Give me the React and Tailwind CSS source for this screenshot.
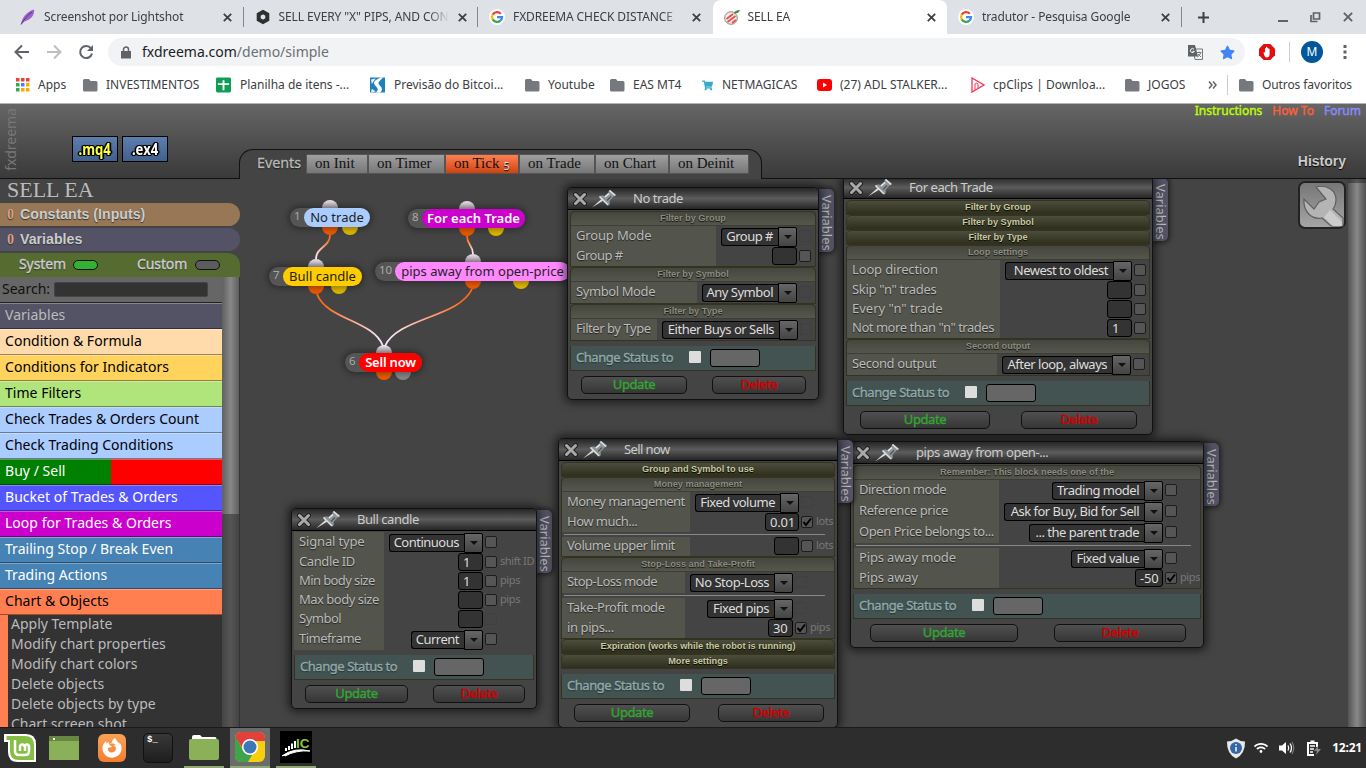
import React from 'react';
import { FaFirefoxBrowser, FaShoppingCart, FaStar, FaWifi } from 'react-icons/fa';

const Folder = () => (
  <svg width="15" height="14" viewBox="0 0 15 14">
    <path d="M0 2.5Q0 1 1.5 1H6l1.5 2H13q1.5 0 1.5 1.5V12q0 1.500-1.500 1.500h-11.500Q0 13.500 0 12z" fill="#75797d" />
  </svg>
);

const GoogleIcon = () => (
  <svg width="16" height="16" viewBox="0 0 16 16">
    <circle cx="8" cy="8" r="8" fill="#fff" />
    <g fill="none" strokeWidth="2.300">
      <path d="M11.800 4.800A5 5 0 0 0 3.700 5.600" stroke="#ea4335" />
      <path d="M3.700 5.600A5 5 0 0 0 3.700 10.400" stroke="#fbbc05" />
      <path d="M3.700 10.400A5 5 0 0 0 11.400 11.600" stroke="#34a853" />
      <path d="M11.400 11.600A5 5 0 0 0 13 8.200H8" stroke="#4285f4" />
    </g>
  </svg>
);

const FeatherIcon = () => (
  <svg width="16" height="16" viewBox="0 0 16 16">
    <path d="M1 15.500C2 9 6 3 14 .5c1 5-3 10-9.500 12z" fill="#9a62c4" />
    <path d="M1 15.500C4 10 8 6 12 3" stroke="#5f2f91" fill="none" />
  </svg>
);

const HexIcon = () => (
  <svg width="16" height="16" viewBox="0 0 16 16">
    <path d="M8 3l4.300 2.500v5L8 13l-4.300-2.500v-5z" fill="none" stroke="#2f2f2f" strokeWidth="4" />
  </svg>
);

const EaIcon = () => (
  <svg width="16" height="16" viewBox="0 0 16 16">
    <circle cx="7" cy="9" r="6.300" fill="#f1ecea" stroke="#8d8583" strokeWidth="1" />
    <path d="M2.500 10l6.500-5M3.500 13l8-6M8 14l4-3" stroke="#ea5045" strokeWidth="1.700" />
    <path d="M9.500 4.500q1.500-3.500 6.500-3.500Q14.500 5 9.500 4.500z" fill="#3a8b32" />
  </svg>
);

const Cross = ({ size = 9, color = '#3c4043', w = 1.800 }) => (
  <svg width={size} height={size} viewBox="0 0 9 9">
    <path d="M.8.8l7.400 7.400M8.200.8L.8 8.200" stroke={color} strokeWidth={w} />
  </svg>
);

const browserTabs = [
  { title: 'Screenshot por Lightshot', icon: <FeatherIcon />, divider: true },
  { title: 'SELL EVERY "X" PIPS, AND CONT', icon: <HexIcon />, divider: true },
  { title: 'FXDREEMA CHECK DISTANCE', icon: <GoogleIcon /> },
  { title: 'SELL EA', icon: <EaIcon />, active: true },
  { title: 'tradutor - Pesquisa Google', icon: <GoogleIcon />, divider: true },
];

const TabStrip = () => (
  <div className="flex h-[34px] bg-[#dee1e6] pl-[9px] text-[12px] text-[#3c4043]">
    {browserTabs.map((tab) => (
      <div
        key={tab.title}
        className={`relative flex w-[234.500px] shrink-0 items-center pl-[11px] ${tab.active ? 'rounded-t-[8px] bg-white' : ''}`}
      >
        {tab.icon}
        <div className="ml-[8px] w-[173px] overflow-hidden whitespace-nowrap tracking-[-0.1px] [mask-image:linear-gradient(to_right,black_150px,transparent_170px)]">
          {tab.title}
        </div>
        <div className="ml-[6px] flex"><Cross /></div>
        {tab.divider && <div className="absolute right-0 top-[7px] h-[20px] w-px bg-[#80868b]" />}
      </div>
    ))}
    <div className="flex flex-1 items-center">
      <svg className="ml-[15px]" width="13" height="13" viewBox="0 0 13 13"><path d="M6.500 1v11M1 6.500h11" stroke="#3c4043" strokeWidth="2" /></svg>
      <svg className="ml-[68px]" width="10" height="12" viewBox="0 0 10 12"><path d="M0 10h10" stroke="#5f6368" strokeWidth="2" /></svg>
      <svg className="ml-[22px]" width="11" height="11" viewBox="0 0 11 11"><path d="M3.500 1h6v6h-6zM1 3v6.500h6.500" fill="none" stroke="#5f6368" strokeWidth="1.700" /></svg>
      <div className="ml-[22px]"><Cross size={10} color="#5f6368" w={1.700} /></div>
    </div>
  </div>
);

const Toolbar = () => (
  <div className="flex h-[36px] items-center bg-white pl-[14px]">
    <svg width="16" height="16" viewBox="0 0 16 16"><path d="M15 8H2M8 1.500L1.500 8 8 14.500" fill="none" stroke="#5f6368" strokeWidth="2" /></svg>
    <svg className="ml-[16px]" width="16" height="16" viewBox="0 0 16 16"><path d="M1 8h13M8 1.500L14.500 8 8 14.500" fill="none" stroke="#bcbfc2" strokeWidth="2" /></svg>
    <svg className="ml-[16px]" width="16" height="16" viewBox="0 0 16 16">
      <path d="M13 4.500A6 6 0 1 0 14 9.500" fill="none" stroke="#5f6368" strokeWidth="2" />
      <path d="M15 1v6H9z" fill="#5f6368" />
    </svg>
    <div className="ml-[14px] flex h-[28px] w-[1137px] items-center rounded-full bg-[#f1f3f4] pl-[13px]">
      <svg width="10" height="13" viewBox="0 0 10 13">
        <path d="M0 5h10v7.500H0z" fill="#5f6368" />
        <path d="M2.500 5V3.500a2.500 2.500 0 0 1 5 0V5" fill="none" stroke="#5f6368" strokeWidth="1.500" />
      </svg>
      <div className="ml-[11px] flex-1 pb-px text-[14px] text-[#6b7075]">
        <span className="text-[#202124]">fxdreema.com</span>/demo/simple
      </div>
      <svg className="mr-[17px]" width="15" height="15" viewBox="0 0 15 15">
        <path d="M5 4h9.500v10.500H7z" fill="#f1f3f4" stroke="#75797d" />
        <path d="M0 0h7l3 11.500H0z" fill="#5f6368" />
        <path d="M6 4.300a2 2 0 1 0 .3 2H4.500" fill="none" stroke="#fff" />
        <path d="M9 7.500h4.500M11 6.500v1M12.500 8q-.5 2.500-3 4M10 9l3 3" fill="none" stroke="#75797d" />
      </svg>
      <FaStar className="mr-[10px] text-[#4285f4]" size={15} />
    </div>
    <svg className="ml-[14px]" width="16" height="16" viewBox="0 0 16 16">
      <path d="M4.700 0h6.600L16 4.700v6.600L11.300 16H4.700L0 11.300V4.700z" fill="#e40d0d" />
      <path d="M4.500 8.500l1-.5.5 1V4.200q.5-.5 1 0V3q.6-.5 1.200 0v1q.6-.5 1.200 0v1q.6-.5 1.200 0V10q0 3.500-3 3.500Q5.500 13.500 4.500 8.500z" fill="#fff" />
    </svg>
    <div className="ml-[14px] h-[20px] w-px bg-[#c9ccd0]" />
    <div className="ml-[11px] flex h-[22px] w-[22px] items-center justify-center rounded-full bg-[#01579b] text-[12px] text-white">M</div>
    <svg className="ml-[20px]" width="4" height="14" viewBox="0 0 4 14">
      <path d="M.5 0h3v3h-3zM.5 5.500h3v3h-3zM.5 11h3v3h-3z" fill="#5f6368" />
    </svg>
  </div>
);

const AppsIcon = () => (
  <svg width="14" height="14" viewBox="0 0 14 14">
    <path d="M0 0h3.500v3.500H0zM5 0h3.500v3.500H5zM10 0h3.500v3.500H10z" fill="#ea4335" />
    <path d="M0 5h3.500v3.500H0zM0 10h3.500v3.500H0z" fill="#34a853" />
    <path d="M5 5h3.500v3.500H5z" fill="#4285f4" />
    <path d="M10 5h3.500v3.500H10zM5 10h3.500v3.500H5zM10 10h3.500v3.500H10z" fill="#f9ab00" />
  </svg>
);

const SheetIcon = () => (
  <svg width="16" height="16" viewBox="0 0 16 16">
    <rect width="16" height="16" rx="1.500" fill="#0f9d58" />
    <path d="M2 7h12M8 3v10.500" stroke="#fff" strokeWidth="2" />
  </svg>
);

const BitcoinIcon = () => (
  <svg width="16" height="16" viewBox="0 0 16 16">
    <path d="M0 0h16v16H0z" fill="#1f80b8" />
    <path d="M11 0h3l-4 4q-2 2 0 4 5 4 1 8H6q4-3 1-6-5-4-1-7z" fill="#fff" />
    <path d="M1 2l5-1-4 6zM2 12l4 3-5 1z" fill="#e5f2f9" />
  </svg>
);

const YoutubeIcon = () => (
  <svg width="15" height="12" viewBox="0 0 15 12">
    <rect width="15" height="12" rx="3" fill="#f00" />
    <path d="M6 3.500v5L10 6z" fill="#fff" />
  </svg>
);

const ClipsIcon = () => (
  <svg width="15" height="16" viewBox="0 0 15 16">
    <path d="M1 1v14l12-7z" fill="none" stroke="#ee3557" strokeWidth="1.300" />
    <path d="M4 13V7q2-2 3 0v4" fill="none" stroke="#ee3557" />
  </svg>
);

const bookmarks = [
  { name: 'Apps', icon: <AppsIcon />, width: 'w-[68px]' },
  { name: 'INVESTIMENTOS', icon: <Folder />, width: 'w-[133px]' },
  { name: 'Planilha de itens -...', icon: <SheetIcon />, width: 'w-[154px]', gap: 'mr-[9px]' },
  { name: 'Previsão do Bitcoi...', icon: <BitcoinIcon />, width: 'w-[155px]', gap: 'mr-[9px]' },
  { name: 'Youtube', icon: <Folder />, width: 'w-[85px]' },
  { name: 'EAS MT4', icon: <Folder />, width: 'w-[90px]' },
  { name: 'NETMAGICAS', icon: <FaShoppingCart className="text-[#35aacb]" size={11} />, width: 'w-[117px]', gap: 'mr-[7px]' },
  { name: '(27) ADL STALKER...', icon: <YoutubeIcon />, width: 'w-[154px]' },
  { name: 'cpClips | Downloa...', icon: <ClipsIcon />, width: 'w-[154px]', gap: 'mr-[7px]' },
  { name: 'JOGOS', icon: <Folder />, width: 'w-[83px]' },
];

const Bookmarks = () => (
  <div className="flex h-[34px] items-center border-b border-[#b5b5b5] bg-white pb-[3px] pl-[15px] text-[12px] text-[#3c4043]">
    {bookmarks.map((b) => (
      <div key={b.name} className={`flex shrink-0 items-center whitespace-nowrap ${b.width}`}>
        <span className={`flex w-[15px] shrink-0 justify-center ${b.gap || 'mr-[8px]'}`}>{b.icon}</span>
        {b.name}
      </div>
    ))}
    <svg width="9" height="8" viewBox="0 0 9 8"><path d="M1 .5L4 4 1 7.500M5 .5L8 4 5 7.500" fill="none" stroke="#5f6368" strokeWidth="1.500" /></svg>
    <div className="ml-[10px] h-[20px] w-px bg-[#c9ccd0]" />
    <div className="ml-[11px] flex items-center gap-[8px] whitespace-nowrap tracking-[-0.1px]"><Folder />Outros favoritos</div>
  </div>
);

const eventTabs = [
  { name: 'on Init', width: 'w-[62px]' },
  { name: 'on Timer', width: 'w-[77px]' },
  { name: 'on Tick', width: 'w-[74px]', count: 5 },
  { name: 'on Trade', width: 'w-[76px]' },
  { name: 'on Chart', width: 'w-[74px]' },
  { name: 'on Deinit', width: 'w-[80px]' },
];

const Header = () => (
  <div className="relative flex h-[75px] shrink-0 border-b border-[#111] bg-linear-to-b from-[#666] to-[#3a3a3a]">
    <div className="flex h-[70px] w-[20px] items-center justify-center text-[14px] text-[#777] [writing-mode:sideways-lr]">fxdreema</div>
    <div className="flex w-[219px] gap-[4px] pl-[52px] pt-[32px] text-[16px] font-bold">
      {['.mq4', '.ex4'].map((ext) => (
        <div key={ext} className="flex h-[26px] w-[46px] items-center justify-center border border-black bg-linear-to-b from-[#5d7fae] to-[#41608c]">
          <span className={`scale-x-[0.82] leading-none [text-shadow:1px_1px_0_#000,-1px_-1px_0_#000,1px_-1px_0_#000,-1px_1px_0_#000,0_0_2px_#000,2px_0_1px_#000,-2px_0_1px_#000] ${ext === '.mq4' ? 'text-[#ff4]' : 'text-white'}`}>{ext}</span>
        </div>
      ))}
    </div>
    <div className="mb-[-1px] mt-[45px] flex w-[523px] rounded-tl-[14px] rounded-tr-[14px] border-x border-t border-[#111] bg-[#444] pl-[17px] pt-[4px]">
      <span className="w-[49px] text-[14.300px] leading-[18px] text-[#bbb] [-webkit-text-stroke:0.3px_currentColor] [text-shadow:0_1px_1px_#000]">Events</span>
      {eventTabs.map((tab) => (
        <div
          key={tab.name}
          className={`flex h-[20px] items-center justify-start whitespace-nowrap border border-[#555] pl-[8px] pb-px font-['Liberation_Serif',serif] text-[15px] text-[#111] ${tab.width} ${tab.count ? 'bg-linear-to-b from-[#ff7f50] to-[#cf420c]' : 'bg-linear-to-b from-[#a0a0a0] to-[#777]'}`}
        >
          {tab.name}
          {tab.count && <sub className="ml-[4px] font-['Noto_Sans',sans-serif] text-[11px] text-[#ddd] [text-shadow:0_1px_1px_#000]">{tab.count}</sub>}
        </div>
      ))}
    </div>
    <div className="flex flex-1 flex-col items-end pr-[5px] text-[12px] leading-[14px]">
      <div className="flex gap-[10px] [-webkit-text-stroke:0.4px_currentColor]">
        <span className="text-[#bf0]">Instructions</span>
        <span className="text-[#ff5e3a]">How To</span>
        <span className="text-[#8a8aff]">Forum</span>
      </div>
      <div className="mr-[15px] mt-[36px] font-['Liberation_Sans',sans-serif] text-[14px] font-bold text-[#ccc] [text-shadow:0_1px_1px_#000]">History</div>
    </div>
  </div>
);

const categories = [
  { name: 'Variables', style: 'bg-[#545366] text-[#bbb]' },
  { name: 'Condition & Formula', style: 'bg-[#ffdaaa] text-black' },
  { name: 'Conditions for Indicators', style: 'bg-[#ffd35c] text-black' },
  { name: 'Time Filters', style: 'bg-[#b0e57c] text-black' },
  { name: 'Check Trades & Orders Count', style: 'bg-[#aaccff] text-black' },
  { name: 'Check Trading Conditions', style: 'bg-[#aaccff] text-black' },
  { name: 'Buy / Sell', style: 'bg-linear-to-r from-[#008000] from-50% to-[#ff0000] to-50% text-white' },
  { name: 'Bucket of Trades & Orders', style: 'bg-[#5555ff] text-white' },
  { name: 'Loop for Trades & Orders', style: 'bg-[#cc00cc] text-white' },
  { name: 'Trailing Stop / Break Even', style: 'bg-[#4682b4] text-white' },
  { name: 'Trading Actions', style: 'bg-[#4682b4] text-white' },
  { name: 'Chart & Objects', style: 'bg-[#ff7f50] text-black' },
];

const chartBlocks = ['Apply Template', 'Modify chart properties', 'Modify chart colors', 'Delete objects', 'Delete objects by type', 'Chart screen shot'];

const Sidebar = () => (
  <div className="flex w-[240px] shrink-0 flex-col overflow-hidden">
    <div className="h-[24px] shrink-0 pl-[7px] font-['Liberation_Serif',serif] text-[22px] leading-[22px] text-[#bbb]">SELL EA</div>
    <div className="mb-[2px] flex h-[23px] w-[240px] shrink-0 items-center gap-[6px] rounded-r-[12px] bg-[#977755] pl-[7px] font-['Liberation_Sans',sans-serif] text-[14.200px] font-bold text-[#ccc] [text-shadow:0_1px_1px_#333]">
      <span className="font-['Liberation_Serif',serif] text-[14px] text-[#d9a080]">0</span>Constants (Inputs)
    </div>
    <div className="mb-[2px] flex h-[23px] w-[240px] shrink-0 items-center gap-[6px] rounded-r-[12px] bg-[#545366] pl-[7px] font-['Liberation_Sans',sans-serif] text-[14.200px] font-bold text-[#ccc] [text-shadow:0_1px_1px_#333]">
      <span className="font-['Liberation_Serif',serif] text-[14px] text-[#d9a080]">0</span>Variables
    </div>
    <div className="flex h-[24px] w-[240px] shrink-0 items-center rounded-tr-[12px] bg-[#556b2f] pb-[3px] pl-[19px] text-[14px] tracking-[-0.1px] text-[#ccc] [-webkit-text-stroke:0.4px_currentColor] [text-shadow:0_1px_1px_#222]">
      <span className="w-[54px]">System</span>
      <span className="mt-[3px] h-[10px] w-[25px] rounded-full border border-[#111] bg-[#32b132]" />
      <span className="ml-[39px] w-[58px]">Custom</span>
      <span className="mt-[3px] h-[10px] w-[25px] rounded-full border border-[#111] bg-[#5c5c5c]" />
    </div>
    <div className="flex min-h-0 flex-1">
      <div className="w-[222px] overflow-hidden bg-[#333] text-[14px]">
        <div className="flex h-[26px] items-center border-b border-[#222] bg-[#666] pl-[2px] text-[#111]">
          <span className="pb-[2px]">Search:</span>
          <div className="ml-[4px] h-[15px] w-[154px] rounded-[2px] border border-[#444] bg-[#333]" />
        </div>
        {categories.map((c) => (
          <div key={c.name} className={`h-[26px] whitespace-nowrap border-b border-black/40 pl-[5px] leading-[24px] tracking-[0.03px] shadow-[inset_0_1px_0_rgba(255,255,255,0.3)] ${c.style}`}>
            {c.name}
          </div>
        ))}
        <div className="border-l-8 border-[#ff7f50] pl-[3px] text-[#bbb]">
          {chartBlocks.map((name) => (
            <div key={name} className="h-[20px] leading-[18px]">{name}</div>
          ))}
        </div>
      </div>
      <div className="w-[18px] border-r border-[#333] bg-linear-to-r from-[#444] via-[#555] to-[#444]">
        <div className="h-[237px] bg-linear-to-r from-[#606060] via-[#888] to-[#606060]" />
      </div>
    </div>
  </div>
);

const nodes = [
  { id: 1, name: 'No trade', pos: 'left-[50px] top-[29px]', num: 'w-[14px]', pill: 'w-[66px] bg-[#aaccff] text-[#222]', dotIn: 'left-[32px]', out: 'left-[32px]', out2: 'left-[52px] bg-[#e0b800]' },
  { id: 8, name: 'For each Trade', pos: 'left-[168px] top-[30px]', num: 'w-[14px]', pill: 'w-[103px] bg-[#cc00cc] text-white font-semibold', dotIn: 'left-[51px]', out: 'left-[51px]', out2: 'left-[80px] bg-[#e0b800]' },
  { id: 7, name: 'Bull candle', pos: 'left-[29px] top-[88px]', num: 'w-[14px]', pill: 'w-[79px] bg-[#ffcc00] text-[#222]', dotIn: 'left-[39px]', out: 'left-[39px]', out2: 'left-[62px] bg-[#e0b800]' },
  { id: 10, name: 'pips away from open-price', pos: 'left-[135px] top-[83px]', num: 'w-[20px]', pill: 'w-[175px] bg-[#ff88ff] text-[#222]', dotIn: 'left-[90px]', out: 'left-[90px]', out2: 'left-[138px] bg-[#e0b800]' },
  { id: 6, name: 'Sell now', pos: 'left-[105px] top-[174px]', num: 'w-[14px]', pill: 'w-[63px] bg-[#ff0000] text-white font-semibold tracking-[-0.2px]', dotIn: 'left-[31px]', out: 'left-[31px]', out2: 'left-[50px] bg-[#888]' },
];

const Node = ({ node }) => (
  <div className={`absolute ${node.pos}`}>
    <div className={`absolute top-[-8px] h-[9px] w-[16px] rounded-t-full bg-linear-to-b from-[#f0e4f0] to-[#a79fa7] ${node.dotIn}`} />
    <div className={`absolute bottom-[-8px] h-[9px] w-[16px] rounded-b-full bg-[#ee5a00] ${node.out}`} />
    <div className={`absolute bottom-[-8px] h-[9px] w-[16px] rounded-b-full ${node.out2}`} />
    <div className="relative flex h-[19px] rounded-full bg-[#555] shadow-[0_0_6px_2px_rgba(0,0,0,0.35)]">
      <span className={`pl-[4px] text-[11.500px] leading-[16px] text-[#aaa] ${node.num}`}>{node.id}</span>
      <span className={`flex h-[19px] items-center justify-center whitespace-nowrap rounded-full text-[13px] ${node.pill}`}>{node.name}</span>
    </div>
  </div>
);

const links = [
  { from: [90, 56], to: [76, 80] },
  { from: [227, 57], to: [233, 75] },
  { from: [77, 115], to: [143, 167] },
  { from: [232, 110], to: [145, 167] },
];

const Links = () => (
  <svg className="absolute left-0 top-0" width="340" height="240">
    {links.map(({ from: [x1, y1], to: [x2, y2] }, i) => {
      const mid = (y1 + y2) / 2;
      const bend = y2 - y1 > 30 ? (x2 - x1) * 0.15 : 0;
      return (
        <g key={i}>
          <linearGradient id={`link${i}`} gradientUnits="userSpaceOnUse" x1={x1} y1={y1} x2={x2} y2={y2}>
            <stop offset="0.150" stopColor="#ff6a1a" />
            <stop offset="0.900" stopColor="#fbe6f5" />
          </linearGradient>
          <path d={`M${x1} ${y1}C${x1 + bend} ${mid} ${x2 - bend} ${mid} ${x2} ${y2}`} fill="none" stroke={`url(#link${i})`} strokeWidth="1.800" />
        </g>
      );
    })}
  </svg>
);

// cb: 'on' | 'off' | 'hidden', hr draws a separator above the row
const panels = [
  {
    title: 'No trade',
    frame: 'left-[327px] top-[8px] w-[252px]',
    sections: [
      {
        name: 'Filter by Group', label: 'w-[145px]', tail: 'w-[18px]',
        rows: [
          { text: 'Group Mode', select: 'Group #', width: 'w-[76px]', cb: 'hidden' },
          { text: 'Group #', value: '', cb: 'off', track: 'tracking-[-0.5px]' },
        ],
      },
      { name: 'Filter by Symbol', label: 'w-[126px]', tail: 'w-[18px]', rows: [{ text: 'Symbol Mode', select: 'Any Symbol', width: 'w-[95px]', cb: 'hidden', track: 'tracking-[-0.4px]' }] },
      { name: 'Filter by Type', label: 'w-[86px]', tail: 'w-[17px]', rows: [{ text: 'Filter by Type', select: 'Either Buys or Sells', width: 'w-[136px]', cb: 'hidden', track: 'tracking-[-0.45px]' }] },
    ],
    update: 'ml-[11px] w-[106px]',
    del: 'ml-[25px] w-[94px]',
  },
  {
    title: 'For each Trade',
    frame: 'left-[603px] top-[-3px] w-[310px]',
    sections: [
      { name: 'Filter by Group', collapsed: true },
      { name: 'Filter by Symbol', collapsed: true },
      { name: 'Filter by Type', collapsed: true },
      {
        name: 'Loop settings', label: 'w-[153px]', tail: 'w-[17px]',
        rows: [
          { text: 'Loop direction', select: 'Newest to oldest', width: 'w-[127px]', cb: 'off' },
          { text: 'Skip "n" trades', value: '', cb: 'off', track: 'tracking-[-0.3px]' },
          { text: 'Every "n" trade', value: '', cb: 'off', track: 'tracking-[0px]' },
          { text: 'Not more than "n" trades', value: '1', cb: 'off', track: 'tracking-[-0.47px]' },
        ],
      },
      { name: 'Second output', label: 'w-[150px]', tail: 'w-[18px]', rows: [{ text: 'Second output', select: 'After loop, always', width: 'w-[129px]', cb: 'off', track: 'tracking-[-0.4px]' }] },
    ],
    update: 'ml-[14px] w-[130px]',
    del: 'ml-[31px] w-[116px]',
  },
  {
    title: 'Bull candle',
    frame: 'left-[51px] top-[329px] w-[246px]',
    sections: [
      {
        label: 'w-[90px]', tail: 'w-[51px]',
        rows: [
          { text: 'Signal type', select: 'Continuous', width: 'w-[94px]', cb: 'off' },
          { text: 'Candle ID', value: '1', cb: 'off', unit: 'shift ID', track: 'tracking-[-0.4px]' },
          { text: 'Min body size', value: '1', cb: 'off', unit: 'pips', track: 'tracking-[-0.6px]' },
          { text: 'Max body size', value: '', cb: 'off', unit: 'pips', track: 'tracking-[-0.5px]' },
          { text: 'Symbol', value: '', cb: 'hidden', track: 'tracking-[-0.5px]' },
          { text: 'Timeframe', select: 'Current', width: 'w-[72px]', cb: 'off', track: 'tracking-[-0.5px]' },
        ],
      },
    ],
    update: 'ml-[11px] w-[103px]',
    del: 'ml-[25px] w-[92px]',
  },
  {
    title: 'pips away from open-...',
    frame: 'left-[610px] top-[262px] w-[354px]',
    titleTrack: 'tracking-[-0.45px]',
    sections: [
      {
        name: 'Remember: This block needs one of the', label: 'w-[145px]', tail: 'w-[37px]',
        rows: [
          { text: 'Direction mode', select: 'Trading model', width: 'w-[111px]', cb: 'off', track: 'tracking-[-0.5px]' },
          { text: 'Reference price', select: 'Ask for Buy, Bid for Sell', width: 'w-[159px]', cb: 'off', track: 'tracking-[-0.4px]' },
          { text: 'Open Price belongs to...', select: '... the parent trade', width: 'w-[134px]', cb: 'off', track: 'tracking-[-0.45px]' },
          { text: 'Pips away mode', select: 'Fixed value', width: 'w-[92px]', cb: 'off', hr: true },
          { text: 'Pips away', value: '-50', width: 'w-[28px]', cb: 'on', unit: 'pips' },
        ],
      },
    ],
    update: 'ml-[17px] w-[148px]',
    del: 'ml-[36px] w-[132px]',
  },
  {
    title: 'Sell now',
    frame: 'left-[318px] top-[259px] w-[280px]',
    titleTrack: 'tracking-[-0.6px]',
    sections: [
      { name: 'Group and Symbol to use', collapsed: true },
      {
        name: 'Money management', label: 'w-[128px]', tail: 'w-[35px]',
        rows: [
          { text: 'Money management', select: 'Fixed volume', width: 'w-[104px]', cb: 'hidden', track: 'tracking-[-0.6px]' },
          { text: 'How much...', value: '0.01', width: 'w-[34px]', cb: 'on', unit: 'lots', track: 'tracking-[-0.5px]' },
          { text: 'Volume upper limit', value: '', cb: 'off', unit: 'lots', hr: true, track: 'tracking-[-0.5px]' },
        ],
      },
      {
        name: 'Stop-Loss and Take-Profit', label: 'w-[123px]', tail: 'w-[41px]',
        rows: [
          { text: 'Stop-Loss mode', select: 'No Stop-Loss', width: 'w-[103px]', cb: 'hidden', track: 'tracking-[-0.55px]' },
          { text: 'Take-Profit mode', select: 'Fixed pips', width: 'w-[86px]', cb: 'hidden', hr: true, track: 'tracking-[-0.4px]' },
          { text: 'in pips...', value: '30', cb: 'on', unit: 'pips', track: 'tracking-[-0.4px]' },
        ],
      },
      { name: 'Expiration (works while the robot is running)', collapsed: true },
      { name: 'More settings', collapsed: true },
    ],
    update: 'ml-[13px] w-[116px]',
    del: 'ml-[28px] w-[106px]',
  },
];

const PushPin = () => (
  <svg width="24" height="18" viewBox="0 0 24 18">
    <path d="M0 17.500L9.500 9l1.500 1.800z" fill="#ddd" />
    <path d="M7 6.500q3-1.500 5.500-.5l4-3.500q-.5-2 1.500-2.500l6 4.500q0 2-2.500 2l-4 4.500q1 3-1 4.500z" fill="#8d9498" />
    <path d="M7.500 6.500l8.500 8.500M17.500.5l5.500 5" stroke="#dfe2e4" strokeWidth="1.500" />
    <path d="M13 7l4-3.500" stroke="#eee" strokeWidth="1.300" />
    <path d="M15 10.500l4-4" stroke="#555" strokeWidth="1.500" />
  </svg>
);

const Row = ({ row, label, tail }) => (
  <>
    {row.hr && (
      <div className="h-[5px] pl-[2px] pt-[2px]"><div className="mr-[9px] h-px bg-[#888]" /></div>
    )}
    <div className={`flex ${row.select ? 'h-[21px]' : 'h-[19px]'}`}>
      <div className={`shrink-0 whitespace-nowrap bg-[#53544b] pl-[5px] text-[#bbb] [text-shadow:0_1px_1px_#222] ${row.select ? 'leading-[19px]' : 'leading-[17px]'} ${row.track || 'tracking-[-0.15px]'} ${label}`}>{row.text}</div>
      <div className="flex flex-1 justify-end">
        {row.select ? (
          <div className={`mt-[2px] flex h-[19px] shrink-0 tracking-[-0.5px] ${row.width}`}>
            <div className="flex h-[18px] flex-1 items-center justify-end whitespace-nowrap rounded-l-[3px] border border-r-0 border-black bg-[#333] pr-[5px] text-[#ddd]">{row.select}</div>
            <div className="mt-[-1px] flex h-[20px] w-[19px] shrink-0 items-center justify-center rounded-r-[2px] border border-black bg-linear-to-b from-[#666] to-[#444]">
              <div className="border-x-4 border-t-4 border-x-transparent border-t-[#111]" />
            </div>
          </div>
        ) : (
          <div className={`h-[18px] shrink-0 rounded-[3px] border border-black bg-[#333] pl-[4px] leading-[16px] tracking-[-0.2px] text-[#ddd] ${row.width || 'w-[25px]'}`}>{row.value}</div>
        )}
      </div>
      <div className={`flex shrink-0 pl-[2px] ${tail}`}>
        <div className={`h-[12px] w-[12px] shrink-0 rounded-[2px] border ${row.select ? 'mt-[4px]' : 'mt-[3px]'} ${row.cb === 'hidden' ? 'border-[#404040]' : 'border-[#1d1d1d] bg-[#555]'}`}>
          {row.cb === 'on' && (
            <svg width="10" height="10" viewBox="0 0 10 10"><path d="M1.500 5l2.500 3L9 1.500" fill="none" stroke="#000" strokeWidth="2" /></svg>
          )}
        </div>
        {row.unit && <span className="ml-[3px] whitespace-nowrap text-[11px] leading-[15px] tracking-[-0.4px] text-[#777]">{row.unit}</span>}
      </div>
    </div>
  </>
);

const Section = ({ section }) => {
  if (section.collapsed) {
    return (
      <div className="h-[15px] rounded-t-[5px] border border-[#33331f] bg-linear-to-b from-[#4c4d3c] to-[#2f2f1e] text-center font-['Liberation_Sans',sans-serif] text-[9.200px] font-bold leading-[12px] text-[#c9c9a0] [text-shadow:0_1px_1px_#000]">
        {section.name}
      </div>
    );
  }
  return (
    <div className={section.name ? 'rounded-t-[5px] border-x border-b border-[#33331f]' : ''}>
      {section.name && (
        <div className="mx-[-1px] h-[15px] rounded-t-[5px] border border-[#33331f] border-b-[#3c3d33] bg-linear-to-b from-[#45463d] to-[#55564c] text-center font-['Liberation_Sans',sans-serif] text-[9.200px] font-bold leading-[12px] text-[#8c8c80] [text-shadow:0_1px_1px_#111]">
          {section.name}
        </div>
      )}
      {section.rows.map((row) => (
        <Row key={row.text} row={row} label={section.label} tail={section.tail} />
      ))}
    </div>
  );
};

const Panel = ({ panel }) => (
  <div className={`absolute ${panel.frame}`}>
    <div className="absolute left-full top-[2px] flex h-[63px] w-[15px] items-center justify-center rounded-r-[5px] bg-[#545366] pt-[4px] text-[13px] text-[#bbb] shadow-[0_0_5px_2px_rgba(0,0,0,0.5)] [writing-mode:vertical-rl]">
      Variables
    </div>
    <div className="relative rounded-[5px] border border-[#111] bg-[#444] px-[2px] pb-[5px] text-[13px] shadow-[0_0_8px_3px_rgba(0,0,0,0.55)]">
      <div className="mx-[-2px] mb-px flex h-[22px] items-center rounded-t-[4px] border-b border-black bg-linear-to-b from-[#262626] via-[#5c5c5c] to-[#262626] pl-[5px]">
        <svg width="14" height="14" viewBox="0 0 14 14">
          <path d="M2.500 2.500l9 9M11.500 2.500l-9 9" stroke="#222" strokeWidth="5" strokeLinecap="round" />
          <path d="M2.500 2.500l9 9M11.500 2.500l-9 9" stroke="#aaa" strokeWidth="3" strokeLinecap="round" />
        </svg>
        <div className="ml-[5px]"><PushPin /></div>
        <span className={`ml-[17px] text-[#ccc] ${panel.titleTrack || 'tracking-[-0.45px]'}`}>{panel.title}</span>
      </div>
      {panel.sections.map((s, i) => <Section key={i} section={s} />)}
      <div className="mt-[5px] flex h-[25px] border-x border-b border-[#33331f] bg-[#425352] pl-[5px]">
        <span className="w-[113px] whitespace-nowrap leading-[22px] tracking-[-0.45px] text-[#8fa9a9] [-webkit-text-stroke:0.4px_currentColor] [text-shadow:0_1px_1px_#222]">Change Status to</span>
        <div className="mt-[5px] h-[12px] w-[12px] rounded-[1px] bg-[#ddd]" />
        <div className="ml-[9px] mt-[3px] h-[18px] w-[50px] rounded-[3px] border border-black bg-[#666]" />
      </div>
      <div className="mt-[5px] flex tracking-[-0.4px] [-webkit-text-stroke:0.4px_currentColor]">
        <button className={`h-[18px] rounded-[5px] border border-[#111] bg-linear-to-b from-[#505050] to-[#363636] pb-[2px] leading-[14px] text-[#32a532] ${panel.update}`}>Update</button>
        <button className={`h-[18px] rounded-[5px] border border-[#111] bg-linear-to-b from-[#505050] to-[#363636] pb-[2px] leading-[14px] text-[#cc0000] ${panel.del}`}>Delete</button>
      </div>
    </div>
  </div>
);

const Canvas = () => (
  <div className="relative flex-1 overflow-hidden bg-[#444]">
    {nodes.map((n) => <Node key={n.id} node={n} />)}
    <Links />
    {panels.map((p) => <Panel key={p.title} panel={p} />)}
    <div className="absolute left-[1058px] top-[2px] h-[48px] w-[48px] rounded-[7px] border-2 border-[#222] bg-linear-to-b from-[#777] to-[#a5a5a5]">
      <svg width="44" height="44" viewBox="0 0 44 44">
        <path d="M16 4C28 1 36 8 36 17q0 5-3 9l10 9v8H31L22 35C11 37 3 28 4 16l10 10 5-7 7-3z" fill="#b4b4b4" stroke="#5f5f5f" strokeWidth="1.200" />
        <path d="M24 34l9 9h9v-4L30 27z" fill="#ccc" />
      </svg>
    </div>
  </div>
);

const Taskbar = () => (
  <div className="flex h-[41px] shrink-0 items-stretch border-t border-[#1a1a1a] bg-[#2d2d2d]">
    <div className="flex w-[40px] items-center justify-center">
      <svg width="32" height="30" viewBox="0 0 32 30">
        <path d="M0 1h22q10 0 10 10v18H14Q4 29 4 19V9H0z" fill="#fff" />
        <path d="M2.500 3H21q9 0 9 9v15H15q-9 0-9-9V7H2.500z" fill="#86be43" />
        <path d="M11 7v11q0 4 4 4h6q4 0 4-4v-4q0-2.500-2-2.500t-2 2.500v4M20.500 14q0-2.500-2.200-2.500T16 14v4" fill="none" stroke="#fff" strokeWidth="2.500" />
      </svg>
    </div>
    <div className="flex w-[48px] items-center justify-center">
      <svg width="30" height="24" viewBox="0 0 30 24"><path d="M0 0h30v24H0z" fill="#8bb158" /><path d="M0 0h30v5H0z" fill="#688642" /><path d="M4 2h2v2H4z" fill="#fff" /></svg>
    </div>
    <div className="flex w-[47px] items-center justify-center">
      <div className="flex h-[28px] w-[28px] items-center justify-center rounded-[6px] bg-linear-to-b from-[#f9a257] to-[#f47d2c] text-white"><FaFirefoxBrowser size={20} /></div>
    </div>
    <div className="flex w-[46px] items-center justify-center">
      <div className="h-[30px] w-[30px] rounded-[5px] border border-[#111] bg-linear-to-b from-[#383838] to-[#1e1e1e] pl-[3px] font-['Liberation_Mono',monospace] text-[9px] font-bold leading-[13px] text-white">$_</div>
    </div>
    <div className="mx-[3px] flex w-[40px] items-center justify-center border-b-2 border-[#8fa876]">
      <svg width="30" height="26" viewBox="0 0 30 26"><path d="M3 3q0-2 2-2h6l2 2h13q1.500 0 1.500 2v4H3z" fill="#fff" /><rect y="5" width="30" height="21" rx="2" fill="#8bb158" /></svg>
    </div>
    <div className="mx-[3px] flex w-[40px] items-center justify-center border-b-2 border-[#8fa876] bg-[#6b6b6b]">
      <svg width="30" height="30" viewBox="0 0 30 30">
        <clipPath id="chrome"><rect width="30" height="30" rx="6" /></clipPath>
        <g clipPath="url(#chrome)">
          <path d="M0 0h30v30H0z" fill="#f8cf0c" />
          <path d="M0 0h30v9H15L8 17 0 5z" fill="#e2403a" />
          <path d="M0 4l8 14 9 5-4 7H0z" fill="#3fa449" />
          <circle cx="15" cy="15" r="8" fill="#fff" />
          <circle cx="15" cy="15" r="6.500" fill="#3c78b8" />
        </g>
      </svg>
    </div>
    <div className="mx-[3px] flex w-[40px] items-center justify-center border-b-2 border-[#8fa876]">
      <svg width="32" height="32" viewBox="0 0 32 32">
        <path d="M0 0h32v32H0z" fill="#000" />
        <path d="M6 17v3M9 15v4M12 12.500v5.500M15 10v7" stroke="#fff" strokeWidth="2" />
        <path d="M2 25q12-9 28-5-14-1-25 5" fill="#fff" stroke="#fff" />
        <text x="16" y="17" fontSize="13.500" fontWeight="bold" fontFamily="Liberation Sans" fill="#8cc63f">IC</text>
      </svg>
    </div>
    <div className="ml-auto flex items-center pr-[4px] text-[12px] font-bold text-white">
      <svg width="20" height="21" viewBox="0 0 20 21">
        <path d="M10 .5q4 3 9 3 .5 12-9 17Q.5 15.500 1 3.500q5 0 9-3z" fill="#e8e8e8" />
        <circle cx="10" cy="10" r="6" fill="#3465a4" />
        <path d="M10 9v4.500M10 6v1.500" stroke="#d5e2f3" strokeWidth="1.800" />
      </svg>
      <FaWifi className="ml-[8px]" size={14} />
      <svg className="ml-[11px]" width="16" height="14" viewBox="0 0 16 14">
        <path d="M0 4.500h3L7 1v12L3 9.500H0z" fill="#fff" />
        <path d="M9 4.500q1.500 2.500 0 5M11 2.500q3 4.500 0 9" fill="none" stroke="#fff" strokeWidth="1.300" />
        <path d="M13 1q3.500 6 0 12" fill="none" stroke="#777" strokeWidth="1.300" />
      </svg>
      <svg className="ml-[12px]" width="14" height="16" viewBox="0 0 14 16">
        <path d="M7 15H1V3h9v4M3.500 1.500h4" fill="none" stroke="#fff" strokeWidth="2" />
        <path d="M3 6h5M3 9h4M3 12h3" stroke="#fff" strokeWidth="1.500" />
        <path d="M11 6l-4 5h3l-1 4 5-6h-3z" fill="#888" />
      </svg>
      <span className="ml-[11px] tracking-[-0.2px]">12:21</span>
    </div>
  </div>
);

const App = () => {
  return (
    <div className="flex h-[768px] w-[1366px] flex-col overflow-hidden bg-[#444] font-['Noto_Sans',sans-serif]">
      <TabStrip />
      <Toolbar />
      <Bookmarks />
      <Header />
      <div className="flex min-h-0 flex-1 overflow-hidden">
        <Sidebar />
        <Canvas />
        <div className="w-[18px] bg-linear-to-r from-[#3c3c3c] via-[#555] to-[#3c3c3c] pt-[4px]">
          <div className="h-full bg-linear-to-r from-[#555] via-[#888] to-[#505050]" />
        </div>
      </div>
      <Taskbar />
    </div>
  );
};

export default App;
